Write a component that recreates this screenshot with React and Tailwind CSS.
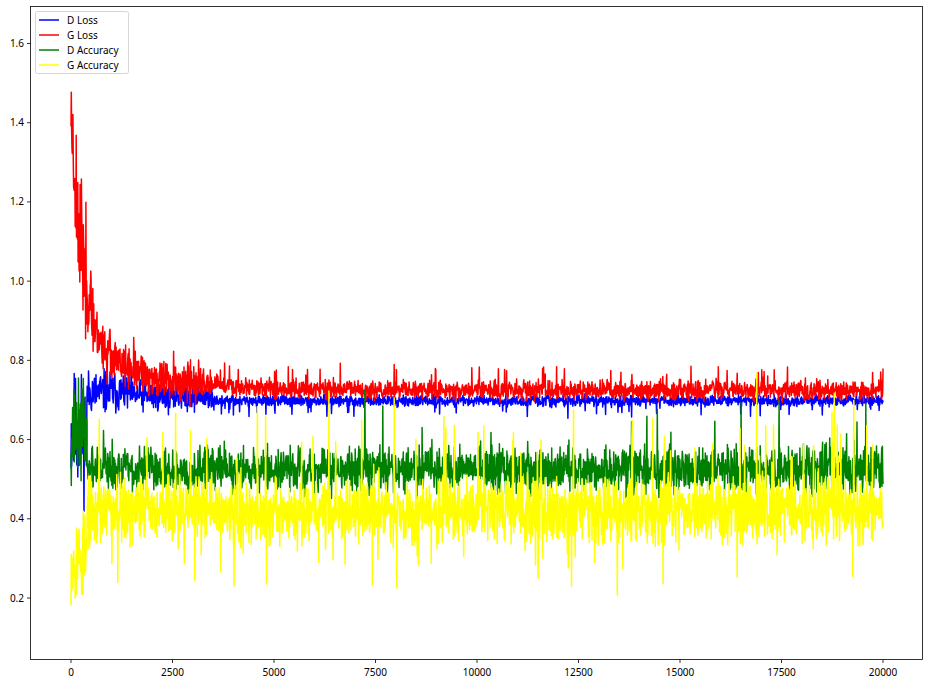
import React from "react";

function rng(seed) {
  let s = seed;
  return () => {
    s = (s * 1664525 + 1013904223) % 4294967296;
    return s / 4294967296;
  };
}
const X0 = 71, XS = (883 - 71) / 20000;
const Y0 = 598, YS = (598 - 43.5) / 1.4;
const px = (x) => X0 + x * XS;
const py = (y) => Y0 - (y - 0.2) * YS;

function series(seed, fn) {
  const r = rng(seed);
  const pts = [];
  for (let i = 0; i <= 20000; i += 8) {
    const v = fn(i, r);
    pts.push(px(i).toFixed(1) + "," + py(v).toFixed(1));
  }
  return pts.join(" ");
}
const n = (r) => (r() + r() + r() - 1.5) / 1.5;

const dLoss = series(11, (i, r) => {
  if (i < 400) return 0.62 + n(r) * 0.22;
  if (i < 1500) return 0.72 + n(r) * 0.08;
  if (i < 3500) return 0.71 + n(r) * 0.055;
  return 0.698 + n(r) * 0.02 + (r() < 0.02 ? -0.03 : 0);
});
const gLoss = series(23, (i, r) => {
  const base = 0.725 + 0.6 * Math.exp(-i / 300) + 0.12 * Math.exp(-i / 1500);
  const amp = i < 400 ? 0.25 : i < 1000 ? 0.12 : i < 3300 ? 0.07 : 0.035;
  return base + n(r) * amp + (r() < 0.02 ? 0.05 : 0);
});
const dAcc = series(37, (i, r) => {
  if (i < 400) return 0.62 + n(r) * 0.18;
  const sp = r() < 0.02 ? (r() - 0.2) * 0.2 : 0;
  return 0.525 + n(r) * 0.08 + sp;
});
const gAcc = series(53, (i, r) => {
  if (i < 400) return 0.3 + n(r) * 0.17;
  const sp = r() < 0.05 ? (r() - 0.4) * 0.45 : 0;
  return 0.42 + n(r) * 0.12 + sp;
});

const legend = [
  ["D Loss", "#0000ff"],
  ["G Loss", "#ff0000"],
  ["D Accuracy", "#008000"],
  ["G Accuracy", "#ffff00"],
];

export default function App() {
  const yt = [0.2, 0.4, 0.6, 0.8, 1.0, 1.2, 1.4, 1.6];
  const xt = [0, 2500, 5000, 7500, 10000, 12500, 15000, 17500, 20000];
  return (
    <div className="w-[930px] h-[683px] bg-white">
      <svg width="930" height="683" viewBox="0 0 930 683" className="block font-['DejaVu_Sans',sans-serif] text-[10px]">
        <defs>
          <clipPath id="c"><rect x="30" y="6" width="893" height="653" /></clipPath>
        </defs>
        <g clipPath="url(#c)" fill="none" strokeWidth="1.5" strokeLinejoin="round">
          <polyline points={dLoss} stroke="#0000ff" />
          <polyline points={gLoss} stroke="#ff0000" />
          <polyline points={dAcc} stroke="#008000" />
          <polyline points={gAcc} stroke="#ffff00" />
        </g>
        <rect x="30.5" y="6.5" width="892" height="653" fill="none" stroke="#000" strokeWidth="0.8" />
        {yt.map((v) => (
          <g key={v}>
            <line x1="27" x2="30.5" y1={py(v)} y2={py(v)} stroke="#000" strokeWidth="0.8" />
            <text x="24" y={py(v) + 3.5} textAnchor="end" fill="#000">{v.toFixed(1)}</text>
          </g>
        ))}
        {xt.map((v) => (
          <g key={v}>
            <line x1={px(v)} x2={px(v)} y1="659.5" y2="663" stroke="#000" strokeWidth="0.8" />
            <text x={px(v)} y="676" textAnchor="middle" fill="#000">{v}</text>
          </g>
        ))}
        <rect x="35.5" y="11.5" width="93" height="62" rx="2" fill="#fff" fillOpacity="0.8" stroke="#ccc" strokeWidth="0.8" />
        {legend.map(([t, c], i) => (
          <g key={t}>
            <line x1="39" x2="59" y1={20 + i * 15} y2={20 + i * 15} stroke={c} strokeWidth="1.5" />
            <text x="67" y={23.5 + i * 15} fill="#000">{t}</text>
          </g>
        ))}
      </svg>
    </div>
  );
}
